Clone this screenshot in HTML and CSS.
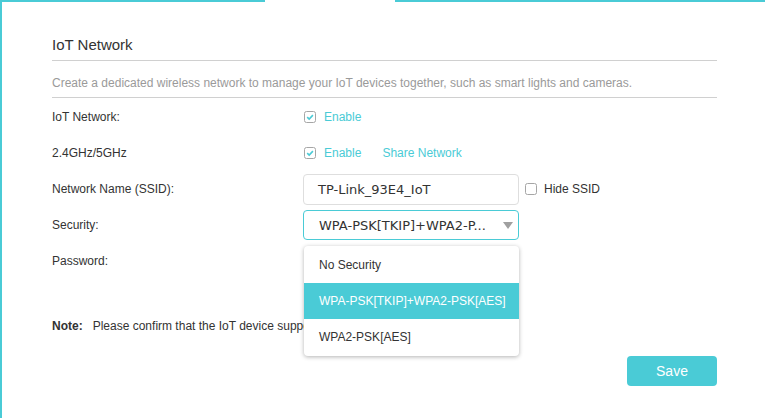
FILE: index.html
```html
<!DOCTYPE html>
<html>
<head>
<meta charset="utf-8">
<link rel="stylesheet" href="styles.css">
</head>
<body>
<div class="page">
  <div class="topline">
    <div class="seg seg-left"></div>
    <div class="seg-gap"></div>
    <div class="seg seg-right"></div>
  </div>
  <div class="section">
    <h2 class="title">IoT Network</h2>
    <p class="desc">Create a dedicated wireless network to manage your IoT devices together, such as smart lights and cameras.</p>
    <div class="rows">
      <div class="row">
        <div class="label">IoT Network:</div>
        <div class="value">
          <span class="check">
            <svg width="12" height="12" viewBox="0 0 12 12"><rect x="0.5" y="0.5" width="11" height="11" rx="2" fill="#fff" stroke="#a6a6a6"/><path d="M3.2 6.1 L5.2 8 L8.9 4.1" fill="none" stroke="#4acbd6" stroke-width="1.6"/></svg>
            <span class="link">Enable</span>
          </span>
        </div>
      </div>
      <div class="row">
        <div class="label">2.4GHz/5GHz</div>
        <div class="value">
          <span class="check">
            <svg width="12" height="12" viewBox="0 0 12 12"><rect x="0.5" y="0.5" width="11" height="11" rx="2" fill="#fff" stroke="#a6a6a6"/><path d="M3.2 6.1 L5.2 8 L8.9 4.1" fill="none" stroke="#4acbd6" stroke-width="1.6"/></svg>
            <span class="link">Enable</span>
          </span>
          <span class="link share">Share Network</span>
        </div>
      </div>
      <div class="row">
        <div class="label">Network Name (SSID):</div>
        <div class="value">
          <div class="input">TP-Link_93E4_IoT</div>
          <span class="check hide">
            <svg width="12" height="12" viewBox="0 0 12 12"><rect x="0.5" y="0.5" width="11" height="11" rx="2" fill="#fff" stroke="#a6a6a6"/></svg>
            <span class="plain">Hide SSID</span>
          </span>
        </div>
      </div>
      <div class="row">
        <div class="label">Security:</div>
        <div class="value">
          <div class="select-wrap">
            <div class="select"><span class="sel-text">WPA-PSK[TKIP]+WPA2-P...</span><span class="arrow"></span></div>
            <ul class="menu">
              <li class="item">No Security</li>
              <li class="item active">WPA-PSK[TKIP]+WPA2-PSK[AES]</li>
              <li class="item">WPA2-PSK[AES]</li>
            </ul>
          </div>
        </div>
      </div>
      <div class="row">
        <div class="label">Password:</div>
        <div class="value"></div>
      </div>
    </div>
    <div class="note"><b class="note-title">Note:</b><span>Please confirm that the IoT device supports this.</span></div>
    <div class="actions"><button class="save">Save</button></div>
  </div>
</div>
</body>
</html>
```

FILE: styles.css
```css
html, body {
  margin: 0;
  padding: 0;
  background: #fff;
}
body {
  font-family: "Liberation Sans", Arial, sans-serif;
  font-size: 12px;
  color: #333;
}
.page {
  width: 765px;
  height: 418px;
  box-sizing: border-box;
  border-left: 2px solid #4acbd6;
  overflow: hidden;
}
.topline {
  display: flex;
  height: 2px;
}
.seg {
  background: #4acbd6;
  height: 2px;
}
.seg-left {
  width: 263px;
}
.seg-gap {
  width: 130px;
}
.seg-right {
  flex: 1;
}
.section {
  margin-left: 50px;
  width: 665px;
}
.title {
  margin: 33px 0 0;
  font-size: 15px;
  font-weight: normal;
  line-height: 20px;
  padding-bottom: 5px;
  border-bottom: 1px solid #d0d0d0;
  color: #333;
}
.desc {
  margin: 0;
  padding: 12px 0 4px;
  line-height: 20px;
  color: #9a9a9a;
  border-bottom: 1px solid #d0d0d0;
}
.rows {
  margin-top: 1px;
}
.row {
  display: flex;
  align-items: center;
  height: 36px;
}
.label {
  width: 251px;
  line-height: 14px;
}
.value {
  display: flex;
  align-items: center;
}
.check {
  display: inline-flex;
  align-items: center;
  margin-left: 1px;
}
.check svg {
  display: block;
  margin-right: 8px;
}
.link {
  color: #4acbd6;
}
.share {
  margin-left: 21px;
}
.plain {
  color: #333;
}
.input {
  box-sizing: border-box;
  width: 216px;
  height: 31px;
  border: 1px solid #dedede;
  border-radius: 4px;
  padding-left: 14px;
  display: flex;
  align-items: center;
  font-family: "DejaVu Sans", sans-serif;
  font-size: 13px;
  color: #333;
}
.hide {
  margin-left: 6px;
}
.hide svg {
  margin-right: 7px;
}
.select-wrap {
  position: relative;
}
.select {
  box-sizing: border-box;
  width: 216px;
  height: 30px;
  border: 1px solid #4acbd6;
  border-radius: 4px;
  padding: 0 5px 0 15px;
  display: flex;
  align-items: center;
  font-family: "DejaVu Sans", sans-serif;
  font-size: 13px;
  color: #333;
}
.sel-text {
  flex: 1;
}
.arrow {
  width: 0;
  height: 0;
  border-left: 5px solid transparent;
  border-right: 5px solid transparent;
  border-top: 7px solid #a0a0a0;
  margin-right: 0;
}
.menu {
  position: absolute;
  left: 1px;
  top: 36px;
  width: 215px;
  margin: 0;
  padding: 1px 0;
  list-style: none;
  background: #fff;
  border-radius: 4px;
  box-shadow: 0 1px 4px rgba(0, 0, 0, 0.3);
  z-index: 5;
}
.item {
  height: 36px;
  line-height: 36px;
  padding-left: 15px;
  color: #333;
}
.item.active {
  background: #4acbd6;
  color: #fff;
}
.note {
  margin-top: 29px;
  height: 36px;
  display: flex;
  align-items: center;
  line-height: 14px;
}
.note-title {
  font-weight: bold;
  margin-right: 10px;
}
.actions {
  display: flex;
  justify-content: flex-end;
  margin-top: 12px;
}
.save {
  width: 90px;
  height: 30px;
  border: none;
  border-radius: 4px;
  background: #4acbd6;
  color: #fff;
  font-family: "Liberation Sans", Arial, sans-serif;
  font-size: 14px;
  padding: 0;
}
```
